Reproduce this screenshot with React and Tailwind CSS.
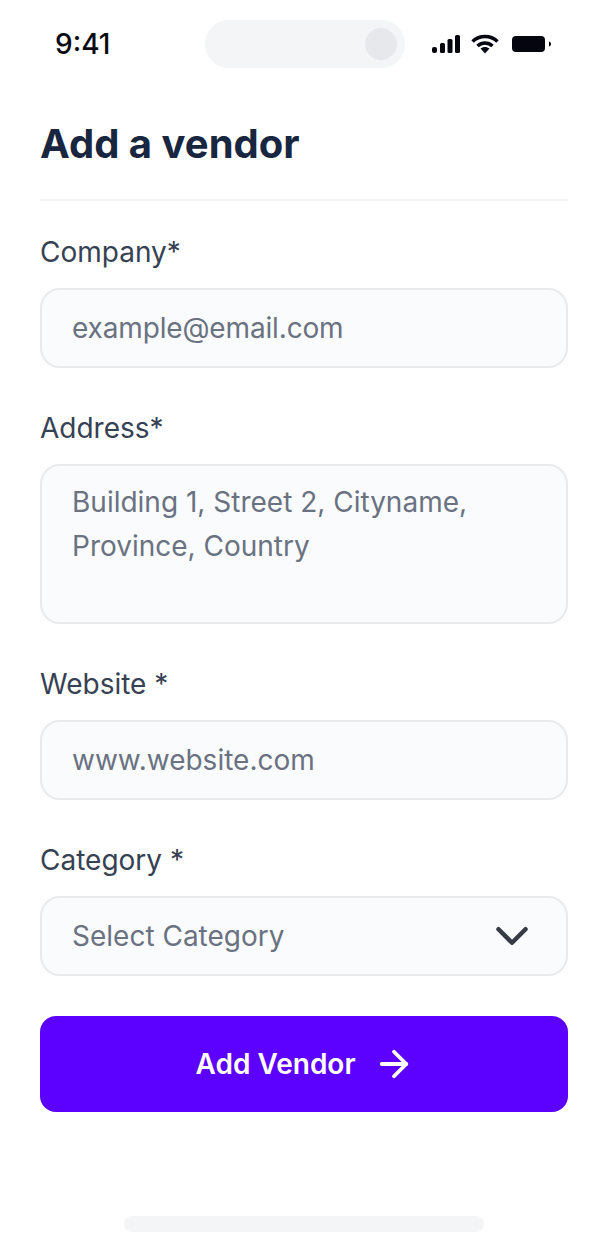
import React from "react";
import { ChevronDown, ArrowRight } from "lucide-react";

const inputClass =
  "h-20 w-full rounded-[20px] border-2 border-[#e9eaec] bg-[#f9fbfc] px-[30px] text-[28px] text-gray-500 outline-none placeholder:text-gray-500";

const StatusIcons = () => (
  <div className="ml-auto flex items-center gap-[11px]">
    <svg width="28" height="20" viewBox="0 0 28 20" fill="#05050f">
      <rect x="0" y="13" width="5" height="6" rx="2" />
      <rect x="8" y="9" width="5" height="10" rx="1.5" />
      <rect x="15.5" y="5" width="5" height="14" rx="1.5" />
      <rect x="23" y="1" width="5" height="18" rx="1.5" />
    </svg>
    <svg width="28" height="20" viewBox="0 0 28 20" fill="none" stroke="#05050f" strokeWidth="3.4">
      <path d="M1.5 7.5C8.5 0.8 19.5 0.8 26.5 7.5" />
      <path d="M6.5 12C10.8 8 17.2 8 21.5 12" />
      <path d="M9.5 14.5L14 19.5L18.5 14.5C16 12.4 12 12.4 9.5 14.5Z" fill="#05050f" stroke="none" />
    </svg>
    <svg width="40" height="18" viewBox="0 0 40 18" fill="#05050f" className="ml-[2px]">
      <rect x="0" y="1" width="33" height="16" rx="4" />
      <path d="M37 6.5C38.5 7 39 8 39 9C39 10 38.5 11 37 11.5Z" />
    </svg>
  </div>
);

const Field = ({ label, children }) => (
  <div className="flex flex-col gap-4">
    <label className="h-10 text-[28px] leading-10 text-gray-700">{label}</label>
    {children}
  </div>
);

const App = () => {
  return (
    <div
      className="relative h-[1248px] w-[608px] overflow-hidden bg-white"
      style={{ fontFamily: "Inter, sans-serif" }}
    >
      <div className="flex h-[88px] items-center pr-[56px] pl-[55px]">
        <span className="mt-[-1px] w-[150px] text-[28px] leading-none font-medium text-[#0b0b14]">
          9:41
        </span>
        <div className="flex h-[48px] w-[200px] items-center justify-end rounded-full bg-[#f3f5f6] pr-2">
          <div className="h-8 w-8 rounded-full bg-[#e6e8eb]" />
        </div>
        <StatusIcons />
      </div>

      <div className="px-10">
        <h1 className="mt-9 h-10 text-[40px] leading-10 font-bold text-[#182640]">
          Add a vendor
        </h1>
        <div className="mt-[35px] mb-[31px] h-[2px] bg-[#f3f4f6]" />

        <div className="flex flex-col gap-10">
          <Field label="Company*">
            <input
              className={`${inputClass} tracking-[-0.15px] placeholder:tracking-[-0.15px]`}
              placeholder="example@email.com"
            />
          </Field>

          <Field label="Address*">
            <textarea
              className="h-40 w-full resize-none rounded-[20px] border-2 border-[#e9eaec] bg-[#f9fbfc] px-[30px] py-[14px] text-[28px] leading-[44px] text-gray-500 outline-none placeholder:text-gray-500"
              placeholder="Building 1, Street 2, Cityname, Province, Country"
            />
          </Field>

          <Field label="Website *">
            <input className={inputClass} placeholder="www.website.com" />
          </Field>

          <Field label="Category *">
            <div className="flex h-20 items-center justify-between rounded-[20px] border-2 border-[#e9eaec] bg-[#f9fbfc] pr-[27px] pl-[30px]">
              <span className="text-[28px] text-gray-500">Select Category</span>
              <ChevronDown size={54} strokeWidth={2} className="text-[#363b45]" />
            </div>
          </Field>

          <button className="flex h-24 w-full items-center justify-center gap-[17px] rounded-2xl bg-[#5c00ff] pl-[2px] text-[28px] font-semibold text-white">
            Add Vendor
            <ArrowRight size={42} strokeWidth={2.2} />
          </button>
        </div>
      </div>

      <div className="absolute bottom-4 left-[124px] h-4 w-[360px] rounded-full bg-[#f3f5f6]" />
    </div>
  );
};

export default App;
